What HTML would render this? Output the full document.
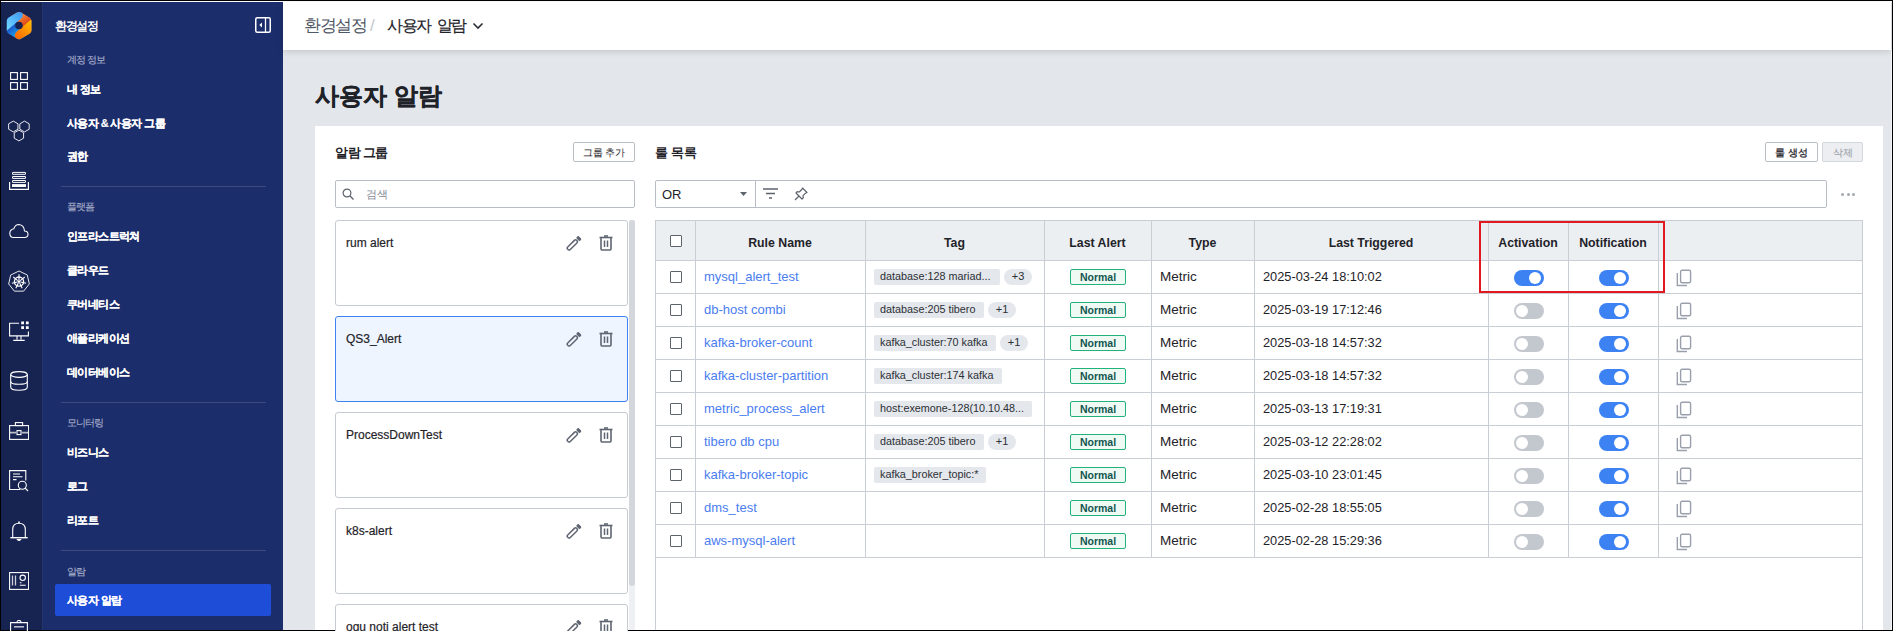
<!DOCTYPE html>
<html><head><meta charset="utf-8">
<style>
*{box-sizing:border-box;margin:0;padding:0}
html,body{width:1893px;height:631px;overflow:hidden;background:#000}
body{position:relative;font-family:"Liberation Sans",sans-serif;}
.a{position:absolute;white-space:nowrap}
.rail{background:#172351}
.side{background:#1c2d6b}
.lbl{color:#aab1cb;font-size:10px;line-height:12px;letter-spacing:-0.9px;-webkit-text-stroke:0.1px #aab1cb}
.item{color:#fff;font-size:11px;font-weight:bold;line-height:14px;letter-spacing:-0.6px;word-spacing:0px;-webkit-text-stroke:0.15px #fff}
.sep{height:1px;background:#3c4a7e}
.hl{background:#c9cdd4}
.th{font-size:12.3px;font-weight:bold;color:#1f2329;line-height:15px;text-align:center}
.cb{width:12px;height:12px;border:1.5px solid #5d636d;border-radius:1px;background:#fff}
.link{color:#4a7df0;font-size:13px;line-height:15px}
.chip{background:#e4e7eb;border-radius:2px;height:16px;font-size:10.8px;line-height:15px;color:#2b2f36;padding-left:6px;overflow:hidden}
.pill{background:#e4e7eb;border-radius:8px;height:16px;width:28px;font-size:11px;line-height:15px;color:#2b2f36;text-align:center}
.badge{width:56px;height:16px;border:1px solid #22b27c;background:#effaf5;border-radius:2px;color:#12564f;font-size:10.5px;font-weight:bold;line-height:14px;text-align:center}
.txt{color:#1f2329;font-size:12.8px;line-height:15px}
.tg{width:30px;height:16px;border-radius:8px}
.tg.on{background:#3d82f2}
.tg.off{background:#c3c7ce}
.tg i{position:absolute;top:2px;width:12px;height:12px;border-radius:6px;background:#fff}
.tg.on i{left:15px}
.tg.off i{left:2px}
.gcard{width:293px;height:86px;border:1px solid #c6cad1;border-radius:3px;background:#fff}
.gname{font-size:12px;color:#1f2329;line-height:14px;-webkit-text-stroke:0.2px #1f2329}
</style></head><body>

<div class="a" style="left:1px;top:1px;width:1891px;height:629px;background:#e3e6ea"></div>
<div class="a" style="left:1px;top:1px;width:1891px;height:1px;background:#fff"></div>
<div class="a rail" style="left:1px;top:2px;width:42px;height:628px;"></div>
<div class="a side" style="left:43px;top:2px;width:240px;height:628px;"></div>
<div class="a" style="left:42px;top:2px;width:1px;height:628px;background:#26356c"></div>
<div class="a" style="left:283px;top:2px;width:1608px;height:48px;background:#fff;box-shadow:0 2px 6px rgba(0,0,0,0.13)"></div>
<div class="a" style="left:304px;top:15px;font-size:16.5px;line-height:20px;color:#4f5664;letter-spacing:-1.3px">환경설정</div>
<div class="a" style="left:370px;top:16px;font-size:17px;line-height:20px;color:#c3c7ce">/</div>
<div class="a" style="left:387px;top:15px;font-size:16.3px;line-height:20px;color:#1f2329;letter-spacing:-1.5px;word-spacing:3px;-webkit-text-stroke:0.2px #1f2329">사용자 알람</div>
<svg class="a" style="left:472px;top:22px" width="12" height="8" viewBox="0 0 12 8"><path d="M1.5 1.5 L6 6 L10.5 1.5" fill="none" stroke="#2a2e35" stroke-width="1.6"/></svg>
<div class="a" style="left:315px;top:81px;font-size:24px;font-weight:bold;line-height:30px;color:#1f2329;-webkit-text-stroke:0.3px #1f2329">사용자 알람</div>
<div class="a" style="left:315px;top:126px;width:1568px;height:504px;background:#fff"></div>
<div class="a" style="left:335px;top:145px;font-size:12.5px;font-weight:bold;line-height:16px;color:#1f2329;letter-spacing:-0.5px">알람 그룹</div>
<div class="a" style="left:573px;top:142px;width:62px;height:20px;border:1px solid #b9bec6;border-radius:2px;background:#fff;font-size:10px;line-height:19px;text-align:center;color:#1f2329">그룹 추가</div>
<div class="a" style="left:335px;top:180px;width:300px;height:28px;border:1px solid #b9bec6;border-radius:2px;background:#fff"></div>
<svg class="a" style="left:342px;top:188px" width="13" height="13" viewBox="0 0 13 13"><circle cx="5" cy="5" r="3.9" fill="none" stroke="#5d636d" stroke-width="1.2"/><path d="M7.8 7.8 L11.5 11.5" stroke="#5d636d" stroke-width="1.4"/></svg>
<div class="a" style="left:366px;top:187px;font-size:11.3px;line-height:14px;color:#858b94;letter-spacing:-0.3px">검색</div>
<div class="a gcard" style="left:335px;top:220px;"></div>
<div class="a gname" style="left:346px;top:236px">rum alert</div>
<svg class="a" style="left:566px;top:235px" width="17" height="17" viewBox="0 0 17 17"><g transform="rotate(-45 6.25 10.05)"><rect x="0.05" y="8.25" width="12.6" height="3.6" rx="1.6" fill="none" stroke="#5f6673" stroke-width="1.5"/><rect x="13.95" y="7.55" width="3.2" height="5" rx="1" fill="#5f6673"/></g></svg>
<svg class="a" style="left:599px;top:235px" width="14" height="16" viewBox="0 0 14 16"><path d="M0.5 2.5 H13.5" stroke="#5f6673" stroke-width="1.6"/><path d="M5 1 H9" stroke="#5f6673" stroke-width="1.6"/><path d="M2 3 V14 Q2 15 3 15 H11 Q12 15 12 14 V3" fill="none" stroke="#5f6673" stroke-width="1.6"/><path d="M5.5 5.5 V12 M8.5 5.5 V12" stroke="#5f6673" stroke-width="1.5"/></svg>
<div class="a gcard" style="left:335px;top:316px;border-color:#3c82f2;background:#eef5ff;"></div>
<div class="a gname" style="left:346px;top:332px">QS3_Alert</div>
<svg class="a" style="left:566px;top:331px" width="17" height="17" viewBox="0 0 17 17"><g transform="rotate(-45 6.25 10.05)"><rect x="0.05" y="8.25" width="12.6" height="3.6" rx="1.6" fill="none" stroke="#5f6673" stroke-width="1.5"/><rect x="13.95" y="7.55" width="3.2" height="5" rx="1" fill="#5f6673"/></g></svg>
<svg class="a" style="left:599px;top:331px" width="14" height="16" viewBox="0 0 14 16"><path d="M0.5 2.5 H13.5" stroke="#5f6673" stroke-width="1.6"/><path d="M5 1 H9" stroke="#5f6673" stroke-width="1.6"/><path d="M2 3 V14 Q2 15 3 15 H11 Q12 15 12 14 V3" fill="none" stroke="#5f6673" stroke-width="1.6"/><path d="M5.5 5.5 V12 M8.5 5.5 V12" stroke="#5f6673" stroke-width="1.5"/></svg>
<div class="a gcard" style="left:335px;top:412px;"></div>
<div class="a gname" style="left:346px;top:428px">ProcessDownTest</div>
<svg class="a" style="left:566px;top:427px" width="17" height="17" viewBox="0 0 17 17"><g transform="rotate(-45 6.25 10.05)"><rect x="0.05" y="8.25" width="12.6" height="3.6" rx="1.6" fill="none" stroke="#5f6673" stroke-width="1.5"/><rect x="13.95" y="7.55" width="3.2" height="5" rx="1" fill="#5f6673"/></g></svg>
<svg class="a" style="left:599px;top:427px" width="14" height="16" viewBox="0 0 14 16"><path d="M0.5 2.5 H13.5" stroke="#5f6673" stroke-width="1.6"/><path d="M5 1 H9" stroke="#5f6673" stroke-width="1.6"/><path d="M2 3 V14 Q2 15 3 15 H11 Q12 15 12 14 V3" fill="none" stroke="#5f6673" stroke-width="1.6"/><path d="M5.5 5.5 V12 M8.5 5.5 V12" stroke="#5f6673" stroke-width="1.5"/></svg>
<div class="a gcard" style="left:335px;top:508px;"></div>
<div class="a gname" style="left:346px;top:524px">k8s-alert</div>
<svg class="a" style="left:566px;top:523px" width="17" height="17" viewBox="0 0 17 17"><g transform="rotate(-45 6.25 10.05)"><rect x="0.05" y="8.25" width="12.6" height="3.6" rx="1.6" fill="none" stroke="#5f6673" stroke-width="1.5"/><rect x="13.95" y="7.55" width="3.2" height="5" rx="1" fill="#5f6673"/></g></svg>
<svg class="a" style="left:599px;top:523px" width="14" height="16" viewBox="0 0 14 16"><path d="M0.5 2.5 H13.5" stroke="#5f6673" stroke-width="1.6"/><path d="M5 1 H9" stroke="#5f6673" stroke-width="1.6"/><path d="M2 3 V14 Q2 15 3 15 H11 Q12 15 12 14 V3" fill="none" stroke="#5f6673" stroke-width="1.6"/><path d="M5.5 5.5 V12 M8.5 5.5 V12" stroke="#5f6673" stroke-width="1.5"/></svg>
<div class="a gcard" style="left:335px;top:604px;"></div>
<div class="a gname" style="left:346px;top:620px">ogu noti alert test</div>
<svg class="a" style="left:566px;top:619px" width="17" height="17" viewBox="0 0 17 17"><g transform="rotate(-45 6.25 10.05)"><rect x="0.05" y="8.25" width="12.6" height="3.6" rx="1.6" fill="none" stroke="#5f6673" stroke-width="1.5"/><rect x="13.95" y="7.55" width="3.2" height="5" rx="1" fill="#5f6673"/></g></svg>
<svg class="a" style="left:599px;top:619px" width="14" height="16" viewBox="0 0 14 16"><path d="M0.5 2.5 H13.5" stroke="#5f6673" stroke-width="1.6"/><path d="M5 1 H9" stroke="#5f6673" stroke-width="1.6"/><path d="M2 3 V14 Q2 15 3 15 H11 Q12 15 12 14 V3" fill="none" stroke="#5f6673" stroke-width="1.6"/><path d="M5.5 5.5 V12 M8.5 5.5 V12" stroke="#5f6673" stroke-width="1.5"/></svg>
<div class="a" style="left:629px;top:220px;width:6px;height:410px;background:#eef0f3"></div>
<div class="a" style="left:629px;top:220px;width:6px;height:366px;background:#d3d6db;border-radius:3px"></div>
<div class="a" style="left:655px;top:145px;font-size:12.5px;font-weight:bold;line-height:16px;color:#1f2329">룰 목록</div>
<div class="a" style="left:1765px;top:142px;width:53px;height:20px;border:1px solid #b9bec6;border-radius:2px;background:#fff;font-size:10px;line-height:19px;text-align:center;color:#1f2329;-webkit-text-stroke:0.25px #1f2329">룰 생성</div>
<div class="a" style="left:1822px;top:142px;width:41px;height:20px;border:1px solid #d3d7dc;border-radius:2px;background:#eceef1;font-size:10px;line-height:19px;text-align:center;color:#a0a5ad;-webkit-text-stroke:0.15px #a0a5ad">삭제</div>
<div class="a" style="left:655px;top:180px;width:1172px;height:28px;border:1px solid #b9bec6;border-radius:2px;background:#fff"></div>
<div class="a" style="left:755px;top:181px;width:1px;height:26px;background:#b9bec6"></div>
<div class="a" style="left:662px;top:187px;font-size:13px;line-height:15px;color:#1f2329">OR</div>
<svg class="a" style="left:740px;top:192px" width="8" height="4" viewBox="0 0 8 4"><path d="M0 0 H7 L3.5 4 Z" fill="#5d636d"/></svg>
<svg class="a" style="left:762px;top:188px" width="17" height="12" viewBox="0 0 17 12"><path d="M1 1 H16 M4 5.5 H13 M7 10 H10" stroke="#5d636d" stroke-width="1.6"/></svg>
<svg class="a" style="left:794px;top:187px" width="14" height="14" viewBox="0 0 14 14"><path d="M8.5 1 L13 5.5 L11.5 6.2 L9 8.7 L9.3 10.8 L8 12 L2 6 L3.2 4.7 L5.3 5 L7.8 2.5 Z" fill="none" stroke="#5d636d" stroke-width="1.2" stroke-linejoin="round"/><path d="M5 9 L1 13" stroke="#5d636d" stroke-width="1.2"/></svg>
<div class="a" style="left:1841.0px;top:193px;width:3px;height:3px;background:#a3a8b0;border-radius:2px"></div>
<div class="a" style="left:1846.5px;top:193px;width:3px;height:3px;background:#a3a8b0;border-radius:2px"></div>
<div class="a" style="left:1852.0px;top:193px;width:3px;height:3px;background:#a3a8b0;border-radius:2px"></div>
<div class="a" style="left:655px;top:220px;width:1208px;height:1px;" ></div>
<div class="a" style="left:656px;top:221px;width:1206px;height:39px;background:#eceff2"></div>
<div class="a hl" style="left:655px;top:220px;width:1208px;height:1px;"></div>
<div class="a hl" style="left:655px;top:260px;width:1208px;height:1px;"></div>
<div class="a hl" style="left:655px;top:220px;width:1px;height:410px;"></div>
<div class="a hl" style="left:1862px;top:220px;width:1px;height:410px;"></div>
<div class="a hl" style="left:695px;top:220px;width:1px;height:338px;"></div>
<div class="a hl" style="left:865px;top:220px;width:1px;height:338px;"></div>
<div class="a hl" style="left:1044px;top:220px;width:1px;height:338px;"></div>
<div class="a hl" style="left:1151px;top:220px;width:1px;height:338px;"></div>
<div class="a hl" style="left:1254px;top:220px;width:1px;height:338px;"></div>
<div class="a hl" style="left:1488px;top:220px;width:1px;height:338px;"></div>
<div class="a hl" style="left:1568px;top:220px;width:1px;height:338px;"></div>
<div class="a hl" style="left:1658px;top:220px;width:1px;height:338px;"></div>
<div class="a hl" style="left:655px;top:293px;width:1208px;height:1px;"></div>
<div class="a hl" style="left:655px;top:326px;width:1208px;height:1px;"></div>
<div class="a hl" style="left:655px;top:359px;width:1208px;height:1px;"></div>
<div class="a hl" style="left:655px;top:392px;width:1208px;height:1px;"></div>
<div class="a hl" style="left:655px;top:425px;width:1208px;height:1px;"></div>
<div class="a hl" style="left:655px;top:458px;width:1208px;height:1px;"></div>
<div class="a hl" style="left:655px;top:491px;width:1208px;height:1px;"></div>
<div class="a hl" style="left:655px;top:524px;width:1208px;height:1px;"></div>
<div class="a hl" style="left:655px;top:557px;width:1208px;height:1px;"></div>
<div class="a cb" style="left:670px;top:235px"></div>
<div class="a th" style="left:695px;width:170px;top:236px">Rule Name</div>
<div class="a th" style="left:865px;width:179px;top:236px">Tag</div>
<div class="a th" style="left:1044px;width:107px;top:236px">Last Alert</div>
<div class="a th" style="left:1151px;width:103px;top:236px">Type</div>
<div class="a th" style="left:1254px;width:234px;top:236px">Last Triggered</div>
<div class="a th" style="left:1488px;width:80px;top:236px">Activation</div>
<div class="a th" style="left:1568px;width:90px;top:236px">Notification</div>
<div class="a cb" style="left:670px;top:271px"></div>
<div class="a link" style="left:704px;top:269px">mysql_alert_test</div>
<div class="a chip" style="left:874px;top:269px;width:126px">database:128 mariad...</div>
<div class="a pill" style="left:1004px;top:269px">+3</div>
<div class="a badge" style="left:1070px;top:269px">Normal</div>
<div class="a txt" style="left:1160px;top:269px;font-size:13.5px">Metric</div>
<div class="a txt" style="left:1263px;top:269px">2025-03-24 18:10:02</div>
<div class="a tg on" style="left:1514px;top:270px"><i></i></div>
<div class="a tg on" style="left:1599px;top:270px"><i></i></div>
<svg class="a" style="left:1676px;top:269px" width="16" height="18" viewBox="0 0 16 18"><rect x="4.6" y="1.2" width="10" height="12.6" rx="1.5" fill="none" stroke="#9aa0ab" stroke-width="1.4"/><path d="M1.3 4 V16.5 H11" fill="none" stroke="#9aa0ab" stroke-width="1.4"/></svg>
<div class="a cb" style="left:670px;top:304px"></div>
<div class="a link" style="left:704px;top:302px">db-host combi</div>
<div class="a chip" style="left:874px;top:302px;width:110px">database:205 tibero</div>
<div class="a pill" style="left:988px;top:302px">+1</div>
<div class="a badge" style="left:1070px;top:302px">Normal</div>
<div class="a txt" style="left:1160px;top:302px;font-size:13.5px">Metric</div>
<div class="a txt" style="left:1263px;top:302px">2025-03-19 17:12:46</div>
<div class="a tg off" style="left:1514px;top:303px"><i></i></div>
<div class="a tg on" style="left:1599px;top:303px"><i></i></div>
<svg class="a" style="left:1676px;top:302px" width="16" height="18" viewBox="0 0 16 18"><rect x="4.6" y="1.2" width="10" height="12.6" rx="1.5" fill="none" stroke="#9aa0ab" stroke-width="1.4"/><path d="M1.3 4 V16.5 H11" fill="none" stroke="#9aa0ab" stroke-width="1.4"/></svg>
<div class="a cb" style="left:670px;top:337px"></div>
<div class="a link" style="left:704px;top:335px">kafka-broker-count</div>
<div class="a chip" style="left:874px;top:335px;width:122px">kafka_cluster:70 kafka</div>
<div class="a pill" style="left:1000px;top:335px">+1</div>
<div class="a badge" style="left:1070px;top:335px">Normal</div>
<div class="a txt" style="left:1160px;top:335px;font-size:13.5px">Metric</div>
<div class="a txt" style="left:1263px;top:335px">2025-03-18 14:57:32</div>
<div class="a tg off" style="left:1514px;top:336px"><i></i></div>
<div class="a tg on" style="left:1599px;top:336px"><i></i></div>
<svg class="a" style="left:1676px;top:335px" width="16" height="18" viewBox="0 0 16 18"><rect x="4.6" y="1.2" width="10" height="12.6" rx="1.5" fill="none" stroke="#9aa0ab" stroke-width="1.4"/><path d="M1.3 4 V16.5 H11" fill="none" stroke="#9aa0ab" stroke-width="1.4"/></svg>
<div class="a cb" style="left:670px;top:370px"></div>
<div class="a link" style="left:704px;top:368px">kafka-cluster-partition</div>
<div class="a chip" style="left:874px;top:368px;width:128px">kafka_cluster:174 kafka</div>
<div class="a badge" style="left:1070px;top:368px">Normal</div>
<div class="a txt" style="left:1160px;top:368px;font-size:13.5px">Metric</div>
<div class="a txt" style="left:1263px;top:368px">2025-03-18 14:57:32</div>
<div class="a tg off" style="left:1514px;top:369px"><i></i></div>
<div class="a tg on" style="left:1599px;top:369px"><i></i></div>
<svg class="a" style="left:1676px;top:368px" width="16" height="18" viewBox="0 0 16 18"><rect x="4.6" y="1.2" width="10" height="12.6" rx="1.5" fill="none" stroke="#9aa0ab" stroke-width="1.4"/><path d="M1.3 4 V16.5 H11" fill="none" stroke="#9aa0ab" stroke-width="1.4"/></svg>
<div class="a cb" style="left:670px;top:403px"></div>
<div class="a link" style="left:704px;top:401px">metric_process_alert</div>
<div class="a chip" style="left:874px;top:401px;width:158px">host:exemone-128(10.10.48...</div>
<div class="a badge" style="left:1070px;top:401px">Normal</div>
<div class="a txt" style="left:1160px;top:401px;font-size:13.5px">Metric</div>
<div class="a txt" style="left:1263px;top:401px">2025-03-13 17:19:31</div>
<div class="a tg off" style="left:1514px;top:402px"><i></i></div>
<div class="a tg on" style="left:1599px;top:402px"><i></i></div>
<svg class="a" style="left:1676px;top:401px" width="16" height="18" viewBox="0 0 16 18"><rect x="4.6" y="1.2" width="10" height="12.6" rx="1.5" fill="none" stroke="#9aa0ab" stroke-width="1.4"/><path d="M1.3 4 V16.5 H11" fill="none" stroke="#9aa0ab" stroke-width="1.4"/></svg>
<div class="a cb" style="left:670px;top:436px"></div>
<div class="a link" style="left:704px;top:434px">tibero db cpu</div>
<div class="a chip" style="left:874px;top:434px;width:110px">database:205 tibero</div>
<div class="a pill" style="left:988px;top:434px">+1</div>
<div class="a badge" style="left:1070px;top:434px">Normal</div>
<div class="a txt" style="left:1160px;top:434px;font-size:13.5px">Metric</div>
<div class="a txt" style="left:1263px;top:434px">2025-03-12 22:28:02</div>
<div class="a tg off" style="left:1514px;top:435px"><i></i></div>
<div class="a tg on" style="left:1599px;top:435px"><i></i></div>
<svg class="a" style="left:1676px;top:434px" width="16" height="18" viewBox="0 0 16 18"><rect x="4.6" y="1.2" width="10" height="12.6" rx="1.5" fill="none" stroke="#9aa0ab" stroke-width="1.4"/><path d="M1.3 4 V16.5 H11" fill="none" stroke="#9aa0ab" stroke-width="1.4"/></svg>
<div class="a cb" style="left:670px;top:469px"></div>
<div class="a link" style="left:704px;top:467px">kafka-broker-topic</div>
<div class="a chip" style="left:874px;top:467px;width:112px">kafka_broker_topic:*</div>
<div class="a badge" style="left:1070px;top:467px">Normal</div>
<div class="a txt" style="left:1160px;top:467px;font-size:13.5px">Metric</div>
<div class="a txt" style="left:1263px;top:467px">2025-03-10 23:01:45</div>
<div class="a tg off" style="left:1514px;top:468px"><i></i></div>
<div class="a tg on" style="left:1599px;top:468px"><i></i></div>
<svg class="a" style="left:1676px;top:467px" width="16" height="18" viewBox="0 0 16 18"><rect x="4.6" y="1.2" width="10" height="12.6" rx="1.5" fill="none" stroke="#9aa0ab" stroke-width="1.4"/><path d="M1.3 4 V16.5 H11" fill="none" stroke="#9aa0ab" stroke-width="1.4"/></svg>
<div class="a cb" style="left:670px;top:502px"></div>
<div class="a link" style="left:704px;top:500px">dms_test</div>
<div class="a badge" style="left:1070px;top:500px">Normal</div>
<div class="a txt" style="left:1160px;top:500px;font-size:13.5px">Metric</div>
<div class="a txt" style="left:1263px;top:500px">2025-02-28 18:55:05</div>
<div class="a tg off" style="left:1514px;top:501px"><i></i></div>
<div class="a tg on" style="left:1599px;top:501px"><i></i></div>
<svg class="a" style="left:1676px;top:500px" width="16" height="18" viewBox="0 0 16 18"><rect x="4.6" y="1.2" width="10" height="12.6" rx="1.5" fill="none" stroke="#9aa0ab" stroke-width="1.4"/><path d="M1.3 4 V16.5 H11" fill="none" stroke="#9aa0ab" stroke-width="1.4"/></svg>
<div class="a cb" style="left:670px;top:535px"></div>
<div class="a link" style="left:704px;top:533px">aws-mysql-alert</div>
<div class="a badge" style="left:1070px;top:533px">Normal</div>
<div class="a txt" style="left:1160px;top:533px;font-size:13.5px">Metric</div>
<div class="a txt" style="left:1263px;top:533px">2025-02-28 15:29:36</div>
<div class="a tg off" style="left:1514px;top:534px"><i></i></div>
<div class="a tg on" style="left:1599px;top:534px"><i></i></div>
<svg class="a" style="left:1676px;top:533px" width="16" height="18" viewBox="0 0 16 18"><rect x="4.6" y="1.2" width="10" height="12.6" rx="1.5" fill="none" stroke="#9aa0ab" stroke-width="1.4"/><path d="M1.3 4 V16.5 H11" fill="none" stroke="#9aa0ab" stroke-width="1.4"/></svg>
<div class="a" style="left:1479px;top:221px;width:186px;height:72px;border:2px solid #e11a22"></div>
<div class="a" style="left:1891px;top:50px;width:1px;height:580px;background:#f4f5f7"></div>
<div class="a" style="left:55px;top:19px;font-size:11.5px;font-weight:bold;line-height:15px;color:#fff;letter-spacing:-1.4px">환경설정</div>
<svg class="a" style="left:255px;top:17px" width="16" height="16" viewBox="0 0 16 16"><rect x="0.75" y="0.75" width="14.5" height="14.5" rx="1.5" fill="none" stroke="#fff" stroke-width="1.5"/><path d="M10.5 1 V15" stroke="#fff" stroke-width="1.3"/><path d="M7 5.5 V10.5 L4.3 8 Z" fill="#fff"/></svg>
<div class="a lbl" style="left:67px;top:53.5px">계정 정보</div>
<div class="a lbl" style="left:67px;top:201.4px">플랫폼</div>
<div class="a lbl" style="left:67px;top:417.4px">모니터링</div>
<div class="a lbl" style="left:67px;top:565.6px">알람</div>
<div class="a" style="left:55px;top:584px;width:216px;height:32px;background:#1e4dd8;border-radius:2px"></div>
<div class="a item" style="left:67px;top:81.9px">내 정보</div>
<div class="a item" style="left:67px;top:115.5px">사용자 &amp; 사용자 그룹</div>
<div class="a item" style="left:67px;top:149.2px">권한</div>
<div class="a item" style="left:67px;top:229.2px">인프라스트럭쳐</div>
<div class="a item" style="left:67px;top:262.9px">클라우드</div>
<div class="a item" style="left:67px;top:297.4px">쿠버네티스</div>
<div class="a item" style="left:67px;top:331.4px">애플리케이션</div>
<div class="a item" style="left:67px;top:365.4px">데이터베이스</div>
<div class="a item" style="left:67px;top:444.7px">비즈니스</div>
<div class="a item" style="left:67px;top:479.1px">로그</div>
<div class="a item" style="left:67px;top:512.8px">리포트</div>
<div class="a item" style="left:67px;top:593.0px">사용자 알람</div>
<div class="a item" style="left:67px;top:629.5px">알림 채널 설정</div>
<div class="a sep" style="left:61px;top:186px;width:205px"></div>
<div class="a sep" style="left:61px;top:402px;width:205px"></div>
<div class="a sep" style="left:61px;top:550px;width:205px"></div>
<svg class="a" style="left:0px;top:0px" width="40" height="50" viewBox="0 0 40 50"><defs><clipPath id="hx"><path d="M17.19 12.50 Q19.10 11.40 21.01 12.50 L29.49 17.40 Q31.40 18.50 31.40 20.70 L31.40 30.50 Q31.40 32.70 29.49 33.80 L21.01 38.70 Q19.10 39.80 17.19 38.70 L8.71 33.80 Q6.80 32.70 6.80 30.50 L6.80 20.70 Q6.80 18.50 8.71 17.40 Z"/></clipPath><linearGradient id="lb" gradientUnits="userSpaceOnUse" x1="8" y1="28" x2="22" y2="13"><stop offset="0" stop-color="#6fd6ff"/><stop offset="1" stop-color="#3d98f4"/></linearGradient><linearGradient id="db" gradientUnits="userSpaceOnUse" x1="9" y1="27" x2="18" y2="38"><stop offset="0" stop-color="#1d4fc6"/><stop offset="1" stop-color="#16b6f6"/></linearGradient><linearGradient id="orr" gradientUnits="userSpaceOnUse" x1="21" y1="14" x2="29" y2="24"><stop offset="0" stop-color="#ff8a30"/><stop offset="1" stop-color="#d63c1a"/></linearGradient><linearGradient id="oy" gradientUnits="userSpaceOnUse" x1="16" y1="37" x2="31" y2="22"><stop offset="0" stop-color="#ff6a00"/><stop offset="1" stop-color="#ffb800"/></linearGradient></defs><g clip-path="url(#hx)"><rect x="0" y="0" width="40" height="50" fill="url(#db)"/><path d="M-0.18 2.62 L38.38 48.58 L61.36 29.30 L22.80 -16.66 Z" fill="url(#orr)"/><path d="M-9.67 37.99 L17.76 14.98" stroke="url(#lb)" stroke-width="10" stroke-linecap="round"/><path d="M47.22 12.44 L19.80 35.46" stroke="url(#oy)" stroke-width="10" stroke-linecap="round"/></g><circle cx="18.95" cy="25.46" r="3.8" fill="#172351"/></svg>
<svg class="a" style="left:10px;top:72px" width="18" height="18" viewBox="0 0 18 18" fill="none" stroke="#fff" stroke-width="1.1"><rect x="0.6" y="0.6" width="6.8" height="6.8"/><rect x="10.6" y="0.6" width="6.8" height="6.8"/><rect x="0.6" y="10.6" width="6.8" height="6.8"/><rect x="10.6" y="10.6" width="6.8" height="6.8"/></svg>
<svg class="a" style="left:8px;top:120px" width="22" height="22" viewBox="0 0 22 22" fill="none" stroke="#fff" stroke-width="0.9"><path d="M5.30 11.90 L0.62 9.20 L0.62 3.80 L5.30 1.10 L9.98 3.80 L9.98 9.20 Z"/><path d="M16.50 11.90 L11.82 9.20 L11.82 3.80 L16.50 1.10 L21.18 3.80 L21.18 9.20 Z"/><path d="M10.90 20.90 L6.22 18.20 L6.22 12.80 L10.90 10.10 L15.58 12.80 L15.58 18.20 Z"/></svg>
<svg class="a" style="left:9px;top:171px" width="21" height="20" viewBox="0 0 21 20" fill="none" stroke="#fff" stroke-width="1"><rect x="3.5" y="1.4" width="13" height="1.9" rx="0.2"/><rect x="3.5" y="5.5" width="13" height="1.9" rx="0.2"/><rect x="3.5" y="9.5" width="13" height="1.9" rx="0.2"/><rect x="3" y="13.1" width="14" height="2.9" fill="#fff" stroke="none"/><path d="M0.6 11 V18.4 H19.4 V11" stroke-width="1.2"/></svg>
<svg class="a" style="left:9px;top:223px" width="20" height="16" viewBox="0 0 20 16" fill="none" stroke="#fff" stroke-width="1.1"><path d="M4.5 14.5 H15.5 Q19 14.5 19 11.3 Q19 8.2 15.5 8 Q15 2 10 1.5 Q6 1.5 4.8 5.8 Q0.8 6.6 0.8 10.5 Q1 14.5 4.5 14.5 Z"/></svg>
<svg class="a" style="left:8px;top:270px" width="22" height="22" viewBox="0 0 22 22" fill="none" stroke="#fff"><path d="M11.00 1.00 L19.29 4.99 L21.33 13.96 L15.60 21.15 L6.40 21.15 L0.67 13.96 L2.71 4.99 Z" stroke-width="0.9" stroke-linejoin="round"/><circle cx="11" cy="11.6" r="4.6" stroke-width="1.3"/><circle cx="11" cy="11.6" r="1.4" fill="#fff" stroke="none"/><path d="M11.00 10.00 L11.00 4.30 M12.25 10.60 L16.71 7.05 M12.56 11.96 L18.12 13.22 M11.69 13.04 L14.17 18.18 M10.31 13.04 L7.83 18.18 M9.44 11.96 L3.88 13.22 M9.75 10.60 L5.29 7.05 " stroke-width="1.1"/></svg>
<svg class="a" style="left:9px;top:321px" width="20" height="20" viewBox="0 0 20 20" fill="none" stroke="#fff" stroke-width="1.1"><path d="M10 2.3 H0.6 V14.9 H19.4 V10.5"/><path d="M8 15 V18.6 M12 15 V18.6 M4.3 19.4 H15.7" /><rect x="12.2" y="0.5" width="2.8" height="2.8" fill="#fff" stroke="none"/><rect x="16.9" y="0.5" width="2.8" height="2.8" fill="#fff" stroke="none"/><rect x="12.2" y="5.2" width="2.8" height="2.8" fill="#fff" stroke="none"/><rect x="16.9" y="5.2" width="2.8" height="2.8" fill="#fff" stroke="none"/></svg>
<svg class="a" style="left:10px;top:371px" width="18" height="20" viewBox="0 0 18 20" fill="none" stroke="#fff" stroke-width="1.1"><ellipse cx="9" cy="3.5" rx="8.3" ry="2.9"/><path d="M0.7 3.5 V16 Q0.7 19.3 9 19.3 Q17.3 19.3 17.3 16 V3.5"/><path d="M0.7 10.5 Q0.7 13.3 9 13.3 Q17.3 13.3 17.3 10.5"/></svg>
<svg class="a" style="left:9px;top:422px" width="20" height="18" viewBox="0 0 20 18" fill="none" stroke="#fff" stroke-width="1.1"><rect x="0.6" y="3.6" width="19" height="13.8"/><rect x="6.4" y="0.6" width="7.2" height="3"/><path d="M0.6 10.6 H7 M13 10.6 H19.6" stroke-width="1.6" stroke-opacity="0.7"/><rect x="8" y="8.6" width="4" height="4"/></svg>
<svg class="a" style="left:9px;top:470px" width="20" height="22" viewBox="0 0 20 22" fill="none" stroke="#fff" stroke-width="1.1"><path d="M11 19.5 H0.6 V0.6 H16.8 V10.5"/><path d="M4 4 H11 M4 6.8 H13.5 M4 9.6 H7.5"/><circle cx="13.3" cy="15.3" r="4"/><path d="M16.2 18.2 L19 21"/></svg>
<svg class="a" style="left:10px;top:521px" width="18" height="21" viewBox="0 0 18 21" fill="none" stroke="#fff" stroke-width="1.1"><path d="M9 0.5 V2.3" stroke-width="1.6"/><path d="M2.7 16.5 V8.5 Q2.7 2.3 9 2.3 Q15.3 2.3 15.3 8.5 V16.5"/><path d="M0.3 16.7 H17.7" stroke-width="1.4"/><path d="M7.5 18.6 Q9 20.3 10.5 18.6 Z" fill="#fff"/></svg>
<svg class="a" style="left:9px;top:572px" width="20" height="18" viewBox="0 0 20 18" fill="none" stroke="#fff" stroke-width="1.1"><rect x="0.6" y="0.6" width="19" height="16.8"/><path d="M3.5 3.5 V13.5 M6.5 3.5 V13.5" stroke-width="1.3" stroke-opacity="0.8"/><circle cx="13.7" cy="5.8" r="2.7"/><path d="M10.8 10.8 H12.5 M10.8 13.2 H16.7"/></svg>
<svg class="a" style="left:10px;top:620px" width="18" height="11" viewBox="0 0 18 11" fill="none" stroke="#fff" stroke-width="1.1"><path d="M0.6 11 V2.6 H17.4 V11"/><path d="M7 2.6 Q7 0.4 9 0.4 Q11 0.4 11 2.6"/><path d="M4 6.8 H14" stroke-width="1.6" stroke-opacity="0.7"/></svg>
</body></html>
